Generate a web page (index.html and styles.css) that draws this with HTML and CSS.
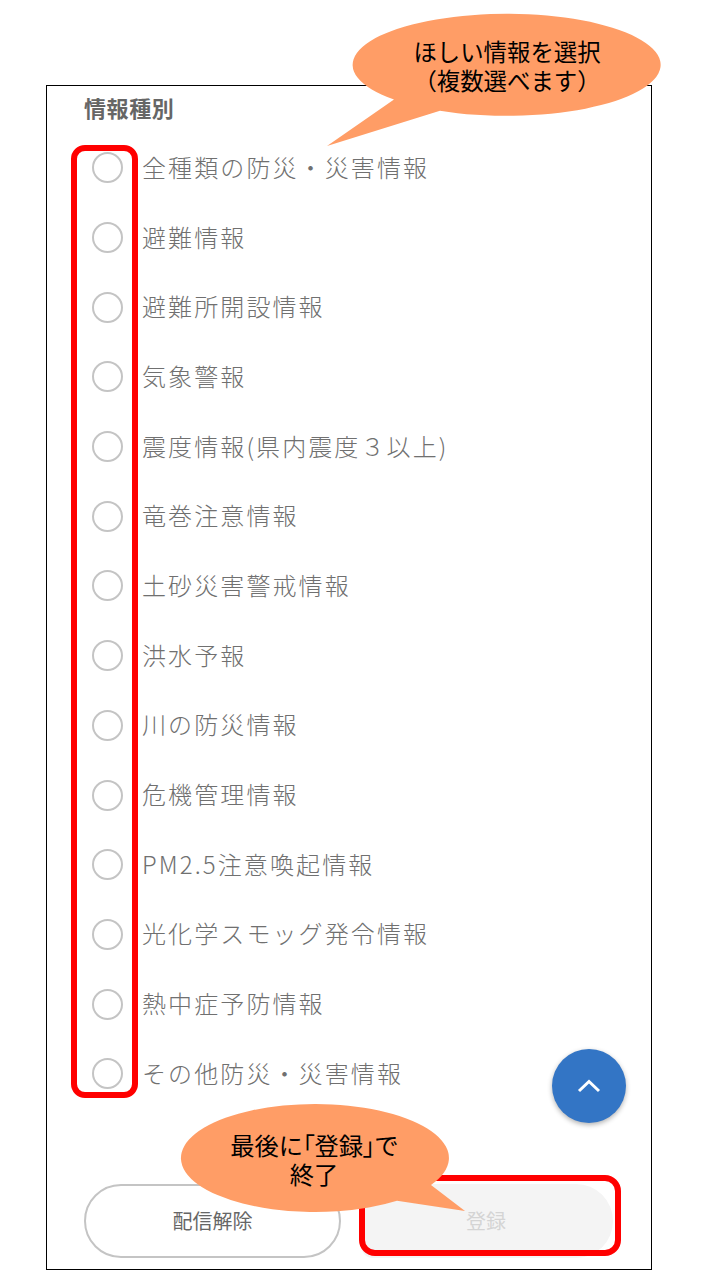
FILE: index.html
```html
<!DOCTYPE html>
<html lang="ja">
<head>
    <meta charset="UTF-8">
    <title>情報種別</title>
    <link rel="stylesheet" href="styles.css">
</head>
<body>
    <div id="card">
        <h2 class="card_title">情報種別</h2>
        <ul class="type_list">
            <li class="type_row"><span class="radio"></span><span>全種類の防災・災害情報</span></li>
            <li class="type_row"><span class="radio"></span><span>避難情報</span></li>
            <li class="type_row"><span class="radio"></span><span>避難所開設情報</span></li>
            <li class="type_row"><span class="radio"></span><span>気象警報</span></li>
            <li class="type_row"><span class="radio"></span><span>震度情報(県内震度３以上)</span></li>
            <li class="type_row"><span class="radio"></span><span>竜巻注意情報</span></li>
            <li class="type_row"><span class="radio"></span><span>土砂災害警戒情報</span></li>
            <li class="type_row"><span class="radio"></span><span>洪水予報</span></li>
            <li class="type_row"><span class="radio"></span><span>川の防災情報</span></li>
            <li class="type_row"><span class="radio"></span><span>危機管理情報</span></li>
            <li class="type_row"><span class="radio"></span><span>PM2.5注意喚起情報</span></li>
            <li class="type_row"><span class="radio"></span><span>光化学スモッグ発令情報</span></li>
            <li class="type_row"><span class="radio"></span><span>熱中症予防情報</span></li>
            <li class="type_row"><span class="radio"></span><span>その他防災・災害情報</span></li>
        </ul>
        <div class="btn_row">
            <div class="btn btn_cancel">配信解除</div>
            <div class="btn btn_submit">登録</div>
        </div>
    </div>

    <!--ページトップボタン-->
    <div id="to_top">
        <svg width="24" height="14" viewBox="0 0 24 14"><path d="M2 12 L12 2.5 L22 12" fill="none" stroke="#fff" stroke-width="3"/></svg>
    </div>

    <!--赤枠-->
    <div class="mark mark_radio"></div>
    <div class="mark mark_submit"></div>

    <!--吹き出し-->
    <svg id="balloons" width="720" height="1280" viewBox="0 0 720 1280">
        <path d="M394 99.6 A154 51 0 1 1 440 110.8 L327 146 Z" fill="#ff9d66"/>
        <path d="M431 1185 L465 1211 L397 1200.7 A134 54 0 1 1 431 1185 Z" fill="#ff9d66"/>
    </svg>
    <div class="balloon_text balloon_top">ほしい情報を選択<br>（複数選べます）</div>
    <div class="balloon_text balloon_bottom">最後に「登録」で<br>終了</div>
</body>
</html>
```

FILE: styles.css
```css
/*全体*/
* {padding:0;margin:0;box-sizing:border-box;}
html,body {width:720px;height:1280px;overflow:hidden;background:#fff;}
body {padding:85px 0 0 46px;font-family:"Noto Sans CJK JP","Noto Sans",sans-serif;position:relative;}

#card {width:606px;height:1185px;border:1px solid #000;padding:6px 0 0 37px;display:flex;flex-direction:column;}
.card_title {font-size:22px;line-height:30px;font-weight:700;color:#666;letter-spacing:0.6px;}

/*種別リスト*/
.type_list {list-style:none;margin-top:11px;}
.type_row {height:69.7px;padding-left:8px;display:flex;align-items:center;gap:19px;font-size:24px;line-height:30px;font-weight:200;color:#707070;letter-spacing:2.1px;}
.type_row span:last-child {margin-top:-2px;}
.radio {width:31px;height:31px;border:2px solid #c4c4c4;border-radius:50%;flex:none;}

/*ボタン*/
.btn_row {display:flex;gap:21px;margin-top:75px;}
.btn {height:74px;display:flex;align-items:center;justify-content:center;font-size:20px;}
.btn_cancel {width:257px;border:2px solid #c4c4c4;border-radius:37px;color:#666;}
.btn_submit {width:251px;padding-right:3px;background:#f4f4f4;border-radius:10px 37px 37px 10px;color:#d4d4d4;}

#to_top {position:absolute;left:552px;top:1049px;width:74px;height:74px;border-radius:50%;background:#3375c5;box-shadow:0 2px 5px rgba(0,0,0,0.3);display:flex;align-items:center;justify-content:center;}

/*注釈*/
.mark {position:absolute;border:6px solid #f00;}
.mark_radio {left:71px;top:145px;width:67px;height:953px;border-radius:14px;}
.mark_submit {left:359px;top:1175px;width:262px;height:81px;border-radius:16px;}

#balloons {position:absolute;left:0;top:0;}
.balloon_text {position:absolute;text-align:center;color:#000;line-height:29px;}
.balloon_top {left:353px;top:37px;width:308px;font-size:23.4px;}
.balloon_bottom {left:181px;top:1130px;width:266px;font-size:24.3px;font-feature-settings:"palt";}
```
